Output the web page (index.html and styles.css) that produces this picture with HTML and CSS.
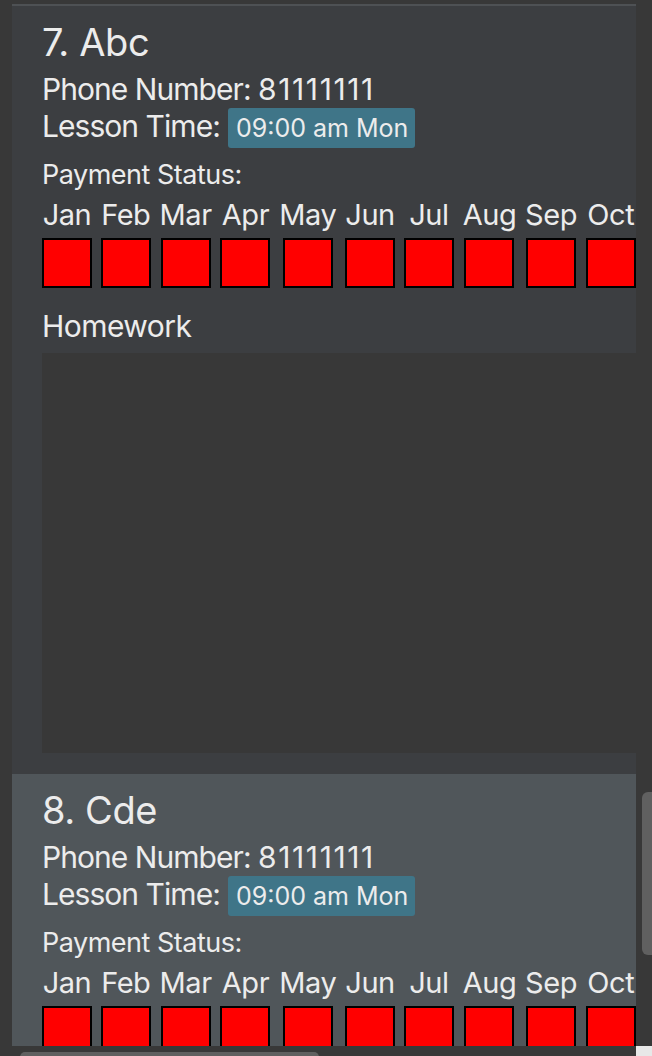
FILE: index.html
```html
<!DOCTYPE html>
<html lang="en">
<head>
<meta charset="utf-8">
<title>Students</title>
<link rel="stylesheet" href="styles.css">
</head>
<body>
<div class="window">
  <div class="gutter-left"></div>
  <div class="list">
    <div class="list-top"></div>
    <div class="card card-a">
      <div class="title">7. Abc</div>
      <div class="line">Phone Number: <span class="num">81111111</span></div>
      <div class="lesson"><span class="line">Lesson Time:</span><span class="badge">09:00 am Mon</span></div>
      <div class="pay-label">Payment Status:</div>
      <div class="months">
        <div class="month"><span class="mlabel">Jan</span><span class="box"></span></div>
        <div class="month"><span class="mlabel">Feb</span><span class="box"></span></div>
        <div class="month"><span class="mlabel">Mar</span><span class="box"></span></div>
        <div class="month"><span class="mlabel">Apr</span><span class="box"></span></div>
        <div class="month"><span class="mlabel">May</span><span class="box"></span></div>
        <div class="month"><span class="mlabel">Jun</span><span class="box"></span></div>
        <div class="month"><span class="mlabel">Jul</span><span class="box"></span></div>
        <div class="month"><span class="mlabel">Aug</span><span class="box"></span></div>
        <div class="month"><span class="mlabel">Sep</span><span class="box"></span></div>
        <div class="month"><span class="mlabel">Oct</span><span class="box"></span></div>
        <div class="month"><span class="mlabel">Nov</span><span class="box"></span></div>
        <div class="month"><span class="mlabel">Dec</span><span class="box"></span></div>
      </div>
      <div class="hw-label">Homework</div>
      <div class="hw-area"></div>
    </div>
    <div class="card card-b">
      <div class="title">8. Cde</div>
      <div class="line">Phone Number: <span class="num">81111111</span></div>
      <div class="lesson"><span class="line">Lesson Time:</span><span class="badge">09:00 am Mon</span></div>
      <div class="pay-label">Payment Status:</div>
      <div class="months">
        <div class="month"><span class="mlabel">Jan</span><span class="box"></span></div>
        <div class="month"><span class="mlabel">Feb</span><span class="box"></span></div>
        <div class="month"><span class="mlabel">Mar</span><span class="box"></span></div>
        <div class="month"><span class="mlabel">Apr</span><span class="box"></span></div>
        <div class="month"><span class="mlabel">May</span><span class="box"></span></div>
        <div class="month"><span class="mlabel">Jun</span><span class="box"></span></div>
        <div class="month"><span class="mlabel">Jul</span><span class="box"></span></div>
        <div class="month"><span class="mlabel">Aug</span><span class="box"></span></div>
        <div class="month"><span class="mlabel">Sep</span><span class="box"></span></div>
        <div class="month"><span class="mlabel">Oct</span><span class="box"></span></div>
        <div class="month"><span class="mlabel">Nov</span><span class="box"></span></div>
        <div class="month"><span class="mlabel">Dec</span><span class="box"></span></div>
      </div>
      <div class="hw-label">Homework</div>
      <div class="hw-area"></div>
    </div>
  </div>
  <div class="vscroll"><div class="vthumb"></div></div>
  <div class="gutter-left"></div>
  <div class="hscroll"><div class="hthumb"></div></div>
  <div class="corner"></div>
</div>
</body>
</html>
```

FILE: styles.css
```css
html, body {
  margin: 0;
  padding: 0;
  background: #383838;
}
body {
  font-family: Inter, "Noto Sans", sans-serif;
  color: #ececec;
}
.window {
  display: grid;
  grid-template-columns: 12px 624px 16px;
  grid-template-rows: 1046px 10px;
  width: 652px;
  height: 1056px;
  overflow: hidden;
}
.gutter-left {
  background: #383838;
}
.list {
  overflow: hidden;
  background: #383838;
}
.list-top {
  height: 2px;
  margin-top: 4px;
  background: #4e5154;
  width: 760px;
}
.card {
  width: 730px;
  padding: 13px 0 21px 30px;
  box-sizing: content-box;
}
.card-a { background: #3c3e41; }
.card-b { background: #50565a; }
.title {
  font-size: 38px;
  line-height: 46px;
  letter-spacing: -0.4px;
}
.line {
  font-size: 30px;
  line-height: 36px;
  letter-spacing: -0.95px;
}
.num {
  letter-spacing: 1.6px;
}
.card .title + .line { margin-top: 6px; }
.lesson {
  display: flex;
  align-items: baseline;
  gap: 8px;
  margin-top: 1px;
  height: 40px;
}
.badge {
  background: #3f7588;
  border-radius: 3px;
  font-size: 25px;
  line-height: 30px;
  padding: 5px 7px 5px 8px;
  letter-spacing: 0;
}
.pay-label {
  font-size: 27px;
  line-height: 32px;
  letter-spacing: -0.5px;
  margin-top: 11px;
}
.months {
  display: flex;
  gap: 8.8px;
  margin-top: 7px;
}
.month {
  display: flex;
  flex-direction: column;
  align-items: center;
  min-width: 50px;
  gap: 6px;
}
.mlabel {
  font-size: 29px;
  line-height: 34px;
  letter-spacing: -0.45px;
}
.box {
  display: block;
  width: 50px;
  height: 50px;
  box-sizing: border-box;
  border: 2px solid #000;
  background: #ff0000;
}
.hw-label {
  font-size: 30px;
  line-height: 36px;
  letter-spacing: -0.55px;
  margin-top: 20px;
}
.hw-area {
  margin-top: 9px;
  height: 400px;
  background: #383838;
}
.vscroll {
  background: #383838;
  padding-top: 792px;
  padding-left: 6px;
}
.vthumb {
  width: 16px;
  height: 163px;
  border-radius: 6px;
  background: #606060;
}
.hscroll {
  background: #383838;
  padding-top: 6px;
  padding-left: 8px;
}
.hthumb {
  width: 299px;
  height: 10px;
  border-radius: 5px;
  background: #606060;
}
.corner {
  background: #e8e8e8;
}
```
